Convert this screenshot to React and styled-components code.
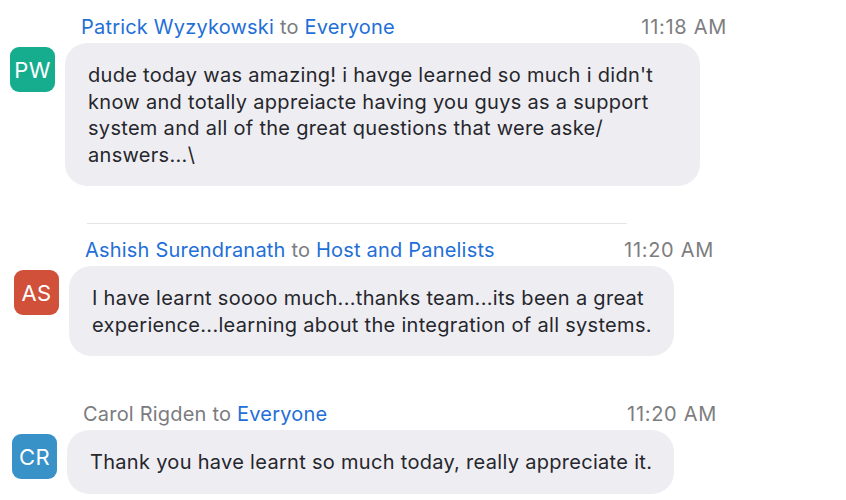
import styled, { createGlobalStyle } from "styled-components";

const GlobalStyle = createGlobalStyle`
  body {
    margin: 0;
    background: #fff;
    font-family: Inter, "Liberation Sans", Arial, sans-serif;
  }
`;

// chat list
const Chat = styled.div`
  display: flex;
  flex-direction: column;
  padding-top: 15px;
  width: 846px;
`;

// one message: avatar column + content column
const Message = styled.div`
  display: grid;
  grid-template-columns: 45px auto;
  grid-template-rows: 24px auto;
  column-gap: 10px;
  row-gap: 4px;
  padding-left: ${(p) => p.$left}px;
  margin-top: ${(p) => p.$top || 0}px;
`;

const Header = styled.div`
  grid-column: 2;
  display: flex;
  justify-content: space-between;
  align-items: center;
  width: ${(p) => p.$width}px;
  padding-left: 16px;
  box-sizing: border-box;
  font-size: 20px;
  line-height: 24px;
  letter-spacing: 0.2px;
`;

const Names = styled.div`
  color: #7b7b80;
`;

const Blue = styled.span`
  color: #1f6fd8;
`;

const Time = styled.span`
  color: #7d7d80;
  letter-spacing: 0.7px;
`;

const Avatar = styled.div`
  grid-column: 1;
  width: 45px;
  height: 45px;
  margin-top: 4px;
  border-radius: 9px;
  background: ${(p) => p.$color};
  color: #fff;
  display: flex;
  align-items: center;
  justify-content: center;
  font-size: 22px;
  letter-spacing: 0.3px;
`;

const Bubble = styled.div`
  grid-column: 2;
  justify-self: start;
  background: #eeeef2;
  border-radius: 22px;
  padding: 19px 22px 18px 23px;
  width: ${(p) => (p.$width ? `${p.$width}px` : "auto")};
  box-sizing: border-box;
  color: #26262d;
  font-size: 20px;
  line-height: 26.5px;
  letter-spacing: 0.3px;
  white-space: pre-line;
`;

const Divider = styled.div`
  height: 1px;
  width: 540px;
  margin: 37px 0 14px 87px;
  background: #e6e6ea;
`;

export default function App() {
  return (
    <>
      <GlobalStyle />
      <Chat>
        <Message $left={10}>
          <Header $width={662}>
            <Names>
              <Blue>Patrick Wyzykowski</Blue> to <Blue>Everyone</Blue>
            </Names>
            <Time>11:18 AM</Time>
          </Header>
          <Avatar $color="#16ad8f">PW</Avatar>
          <Bubble $width={635}>
            {"dude today was amazing! i havge learned so much i didn't\nknow and totally appreiacte having you guys as a support\nsystem and all of the great questions that were aske/\nanswers...\\"}
          </Bubble>
        </Message>

        <Divider />

        <Message $left={14}>
          <Header $width={645}>
            <Names>
              <Blue>Ashish Surendranath</Blue> to <Blue>Host and Panelists</Blue>
            </Names>
            <Time>11:20 AM</Time>
          </Header>
          <Avatar $color="#d0503a">AS</Avatar>
          <Bubble>
            {"I have learnt soooo much...thanks team...its been a great\nexperience...learning about the integration of all systems."}
          </Bubble>
        </Message>

        <Message $left={12} $top={46}>
          <Header $width={650}>
            <Names>
              Carol Rigden to <Blue>Everyone</Blue>
            </Names>
            <Time>11:20 AM</Time>
          </Header>
          <Avatar $color="#3892c8">CR</Avatar>
          <Bubble>Thank you have learnt so much today, really appreciate it.</Bubble>
        </Message>
      </Chat>
    </>
  );
}
